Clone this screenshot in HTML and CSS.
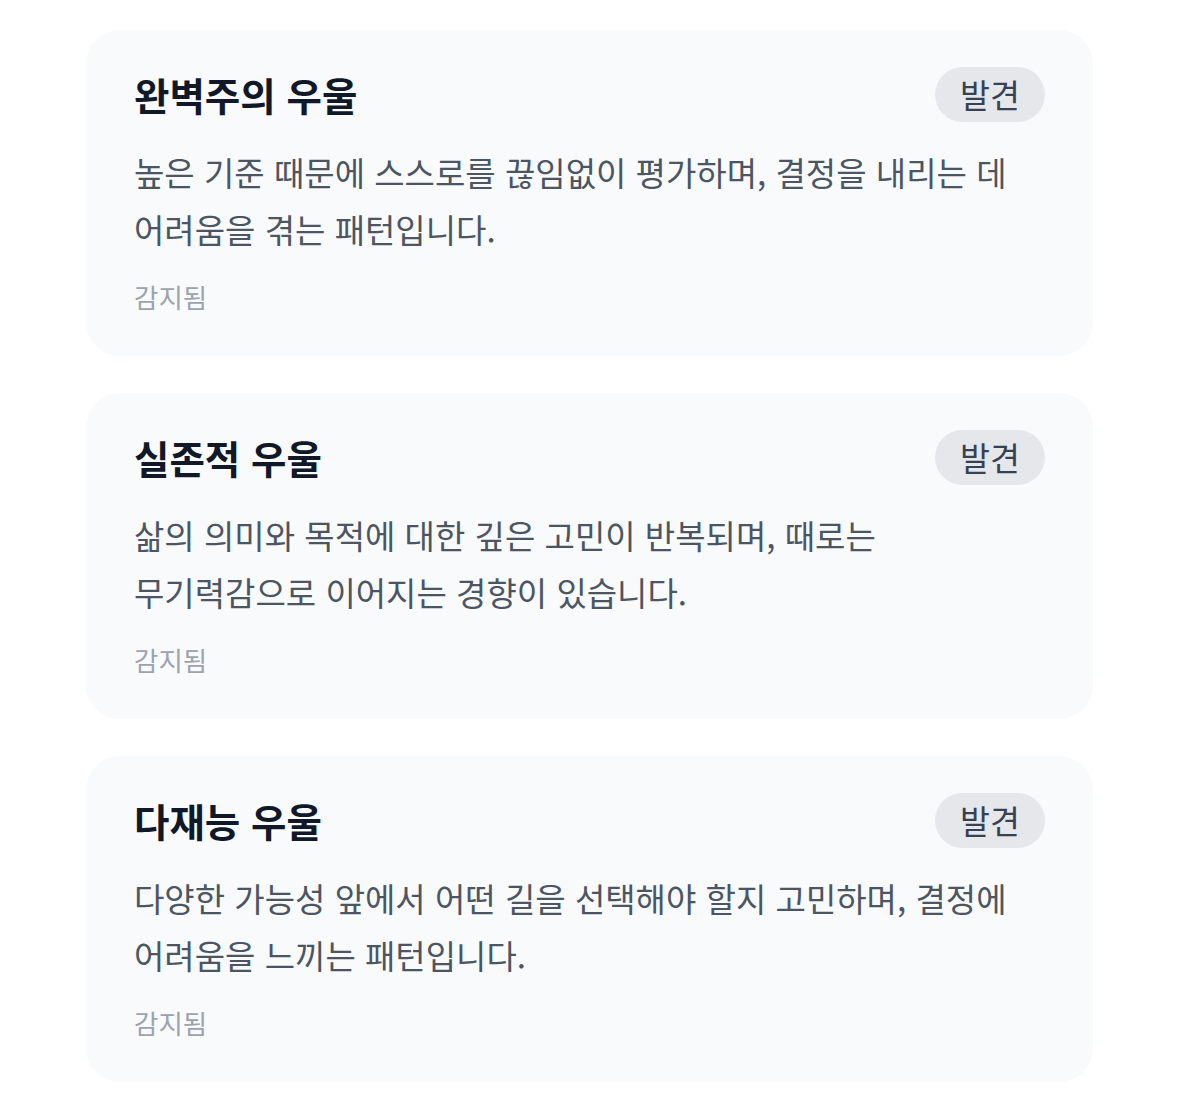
FILE: index.html
```html
<!DOCTYPE html>
<html lang="ko">
<head>
<meta charset="utf-8">
<link rel="stylesheet" href="styles.css">
</head>
<body>
<main class="list">
  <section class="card">
    <div class="head">
      <h2 class="title">완벽주의 우울</h2>
      <span class="badge">발견</span>
    </div>
    <p class="desc">높은 기준 때문에 스스로를 끊임없이 평가하며, 결정을 내리는 데 어려움을 겪는 패턴입니다.</p>
    <p class="meta">감지됨</p>
  </section>
  <section class="card">
    <div class="head">
      <h2 class="title">실존적 우울</h2>
      <span class="badge">발견</span>
    </div>
    <p class="desc">삶의 의미와 목적에 대한 깊은 고민이 반복되며, 때로는 무기력감으로 이어지는 경향이 있습니다.</p>
    <p class="meta">감지됨</p>
  </section>
  <section class="card">
    <div class="head">
      <h2 class="title">다재능 우울</h2>
      <span class="badge">발견</span>
    </div>
    <p class="desc">다양한 가능성 앞에서 어떤 길을 선택해야 할지 고민하며, 결정에 어려움을 느끼는 패턴입니다.</p>
    <p class="meta">감지됨</p>
  </section>
</main>
</body>
</html>
```
FILE: styles.css
```css
* { box-sizing: border-box; }
html, body {
  margin: 0;
  padding: 0;
  background: #ffffff;
}
body {
  font-family: "Noto Sans CJK KR", "Noto Sans", sans-serif;
}
.list {
  display: flex;
  flex-direction: column;
  gap: 37px;
  padding: 30px 86px 0;
}
.card {
  background: #f9fafb;
  border-radius: 34px;
  padding: 37px 48px 41px;
}
.head {
  display: flex;
  align-items: center;
  justify-content: space-between;
  height: 55px;
}
.title {
  margin: 0;
  font-size: 38.5px;
  font-weight: 600;
  color: #111827;
  line-height: 1;
}
.badge {
  display: flex;
  align-items: center;
  justify-content: center;
  height: 55px;
  width: 110px;
  border-radius: 999px;
  background: #e5e7eb;
  color: #374151;
  font-size: 32.5px;
  line-height: 1;
}
.desc {
  margin: 22px 0 0;
  font-size: 33px;
  line-height: 57px;
  color: #4b5563;
  word-break: keep-all;
}
.meta {
  margin: 21px 0 0;
  font-size: 26.5px;
  line-height: 36px;
  color: #9ca3af;
}
```
